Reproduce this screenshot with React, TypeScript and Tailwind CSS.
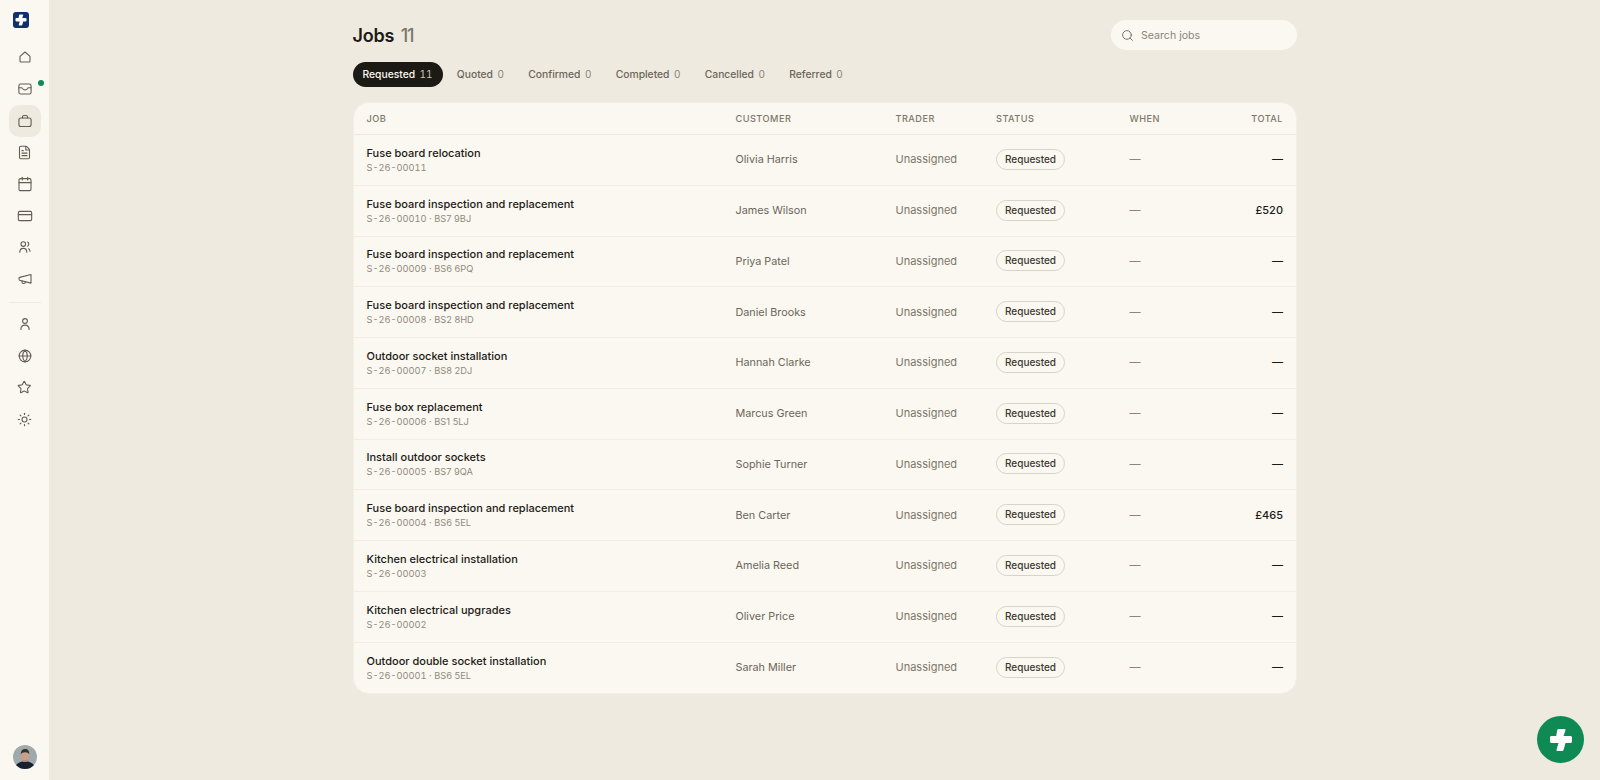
import React from 'react';
import { FileText, Calendar, CreditCard, Globe, Star, Sun, Search } from 'lucide-react';

interface Job {
  title: string;
  code: string;
  postcode?: string;
  customer: string;
  total: string;
}

const jobs: Job[] = [
  { title: 'Fuse board relocation', code: 'S-26-00011', customer: 'Olivia Harris', total: '—' },
  { title: 'Fuse board inspection and replacement', code: 'S-26-00010', postcode: 'BS7 9BJ', customer: 'James Wilson', total: '£520' },
  { title: 'Fuse board inspection and replacement', code: 'S-26-00009', postcode: 'BS6 6PQ', customer: 'Priya Patel', total: '—' },
  { title: 'Fuse board inspection and replacement', code: 'S-26-00008', postcode: 'BS2 8HD', customer: 'Daniel Brooks', total: '—' },
  { title: 'Outdoor socket installation', code: 'S-26-00007', postcode: 'BS8 2DJ', customer: 'Hannah Clarke', total: '—' },
  { title: 'Fuse box replacement', code: 'S-26-00006', postcode: 'BS1 5LJ', customer: 'Marcus Green', total: '—' },
  { title: 'Install outdoor sockets', code: 'S-26-00005', postcode: 'BS7 9QA', customer: 'Sophie Turner', total: '—' },
  { title: 'Fuse board inspection and replacement', code: 'S-26-00004', postcode: 'BS6 5EL', customer: 'Ben Carter', total: '£465' },
  { title: 'Kitchen electrical installation', code: 'S-26-00003', customer: 'Amelia Reed', total: '—' },
  { title: 'Kitchen electrical upgrades', code: 'S-26-00002', customer: 'Oliver Price', total: '—' },
  { title: 'Outdoor double socket installation', code: 'S-26-00001', postcode: 'BS6 5EL', customer: 'Sarah Miller', total: '—' },
];

const tabs = [
  { label: 'Requested', count: 11 },
  { label: 'Quoted', count: 0 },
  { label: 'Confirmed', count: 0 },
  { label: 'Completed', count: 0 },
  { label: 'Cancelled', count: 0 },
  { label: 'Referred', count: 0 },
];

const Glyph: React.FC<{ children: React.ReactNode }> = ({ children }) => (
  <svg viewBox="0 0 16 16" width="16" height="16" fill="none" stroke="currentColor" strokeWidth="1.100" strokeLinecap="round" strokeLinejoin="round">
    {children}
  </svg>
);

const HomeIcon = () => (
  <Glyph>
    <path d="M3 7.300 8 3l5 4.300V12a1 1 0 0 1-1 1H4a1 1 0 0 1-1-1z" />
  </Glyph>
);

const InboxIcon = () => (
  <Glyph>
    <rect x="1.900" y="3" width="12.200" height="10" rx="1.800" />
    <path d="M2 6.800h2.400c.5 0 .8.200 1 .6.500.9 1.400 1.500 2.600 1.500s2.100-.6 2.600-1.500c.2-.4.5-.6 1-.6H14" />
  </Glyph>
);

const BriefcaseIcon = () => (
  <Glyph>
    <rect x="1.900" y="5" width="12.200" height="8.500" rx="2" />
    <path d="M5.500 5V4A1.500 1.500 0 0 1 7 2.500h2A1.500 1.500 0 0 1 10.500 4v1" />
  </Glyph>
);

const UsersIcon = () => (
  <Glyph>
    <circle cx="6.300" cy="5.100" r="2.300" />
    <path d="M2.800 13.200c0-2.500 1.400-3.800 3.500-3.800s3.500 1.300 3.500 3.800" />
    <path d="M10.600 3c.8.400 1.200 1.200 1.200 2.100s-.4 1.700-1.200 2.100" />
    <path d="M11.700 9.700c.8.500 1.200 1.400 1.300 2.600" />
  </Glyph>
);

const MegaphoneIcon = () => (
  <Glyph>
    <path d="M14 3.500 2.600 6.400a.6.6 0 0 0-.5.6v1.600c0 .3.200.5.500.6L14 12.100z" />
    <path d="M5 9.900v1.200c0 .8.600 1.400 1.400 1.400h.6c.8 0 1.400-.6 1.400-1.400v-.4" />
  </Glyph>
);

const UserIcon = () => (
  <Glyph>
    <circle cx="8" cy="5" r="2.400" />
    <path d="M3.900 13.400c0-2.800 1.700-4.300 4.100-4.300s4.100 1.500 4.100 4.300" />
  </Glyph>
);

const Mark: React.FC<{ className?: string }> = ({ className }) => (
  <svg viewBox="0 0 24 24" className={className} fill="currentColor">
    <path d="M9.500 1h6c.8 0 1.200.6 1 1.300L14.500 8h7c.8 0 1.500.7 1.500 1.500v4c0 .8-.7 1.500-1.500 1.500h-5l-2 7c-.2.600-.6 1-1.200 1H8.500c-.8 0-1.200-.6-1-1.300L9.500 15h-7C1.700 15 1 14.300 1 13.500v-4C1 8.700 1.700 8 2.500 8h4.700l1.100-6c.1-.6.600-1 1.200-1z" />
  </svg>
);

const Avatar: React.FC = () => (
  <svg viewBox="0 0 24 24" className="h-6 w-6 rounded-full">
    <rect width="24" height="24" fill="#a0a9ac" />
    <path d="M2 24c0-5 4-6.500 7-7.500h6c3 1 7 2.500 7 7.500z" fill="#16202e" />
    <rect x="9.800" y="13" width="4.400" height="4" fill="#b48a74" />
    <ellipse cx="12" cy="10.500" rx="4.100" ry="4.800" fill="#c9a08a" />
    <path d="M7.900 9.500c-.4-3.500 1.600-5.500 4.300-5.500s4.400 2 3.900 5.500c-.6-1.500-1.500-2.300-3.900-2.300s-3.700.8-4.300 2.300z" fill="#3a302a" />
  </svg>
);

const NavButton: React.FC<{ children: React.ReactNode; active?: boolean; dot?: boolean }> = ({ children, active, dot }) => (
  <div className={`relative flex h-[31.700px] w-8 items-center justify-center rounded-[10px] text-[#625e53] ${active ? 'bg-[#eeeae0]' : ''}`}>
    {children}
    {dot && <span className="absolute -right-[3px] top-[6.500px] h-[6px] w-[6px] rounded-full bg-[#0f8a55]" />}
  </div>
);

const columns = 'grid grid-cols-[369px_160px_100.500px_133.500px_1fr_auto] items-center pl-[13px] pr-[12.500px]';
const lucide = { size: 15, strokeWidth: 1.750 };

const App: React.FC = () => {
  return (
    <div className="relative flex h-[780px] overflow-hidden bg-[#eeeae0] font-['Inter',sans-serif] text-[#1c1a16]">
      <aside className="flex w-[49px] shrink-0 flex-col items-center bg-[#fbf8f1] pb-[11px] pt-[12px]">
        <div className="ml-[13px] flex h-4 w-4 items-center justify-center self-start rounded-[3px] bg-[#10306b] text-white">
          <Mark className="h-3 w-3" />
        </div>
        <nav className="mt-[13.500px] flex flex-col items-center">
          <NavButton><HomeIcon /></NavButton>
          <NavButton dot><InboxIcon /></NavButton>
          <NavButton active><BriefcaseIcon /></NavButton>
          <NavButton><FileText {...lucide} /></NavButton>
          <NavButton><Calendar size={16} strokeWidth={1.650} /></NavButton>
          <NavButton><CreditCard size={16} strokeWidth={1.650} /></NavButton>
          <NavButton><UsersIcon /></NavButton>
          <NavButton><MegaphoneIcon /></NavButton>
          <div className="mb-[5.500px] mt-[7px] h-px w-8 bg-[#eeeae0]" />
          <NavButton><UserIcon /></NavButton>
          <NavButton><Globe size={14} strokeWidth={1.900} /></NavButton>
          <NavButton><Star size={14.500} strokeWidth={1.800} /></NavButton>
          <NavButton><Sun {...lucide} /></NavButton>
        </nav>
        <div className="mt-auto">
          <Avatar />
        </div>
      </aside>

      <main className="flex-1">
        <div className="mx-auto w-[944px] pt-[20px]">
          <div className="flex h-[30px] items-center justify-between">
            <h1 className="pt-[1px] text-[18px] font-semibold tracking-[-0.01em]">
              Jobs <span className="ml-[2px] font-medium tracking-[-0.06em] text-[#7d7769]">11</span>
            </h1>
            <div className="flex h-[30px] w-[186px] items-center gap-[7px] rounded-full bg-[#fbf8f1] px-[10.500px] text-[#8b8679]">
              <Search size={13} strokeWidth={1.700} className="text-[#6b665a]" />
              <span className="pt-[2.500px] text-[10.600px]">Search jobs</span>
            </div>
          </div>

          <div className="mt-[12px] flex items-center gap-[4.300px]">
            {tabs.map((t, i) => (
              <div
                key={t.label}
                className={`flex h-[25px] items-center gap-[4.500px] rounded-full px-[10px] text-[10.300px] font-medium ${i === 0 ? 'bg-[#1c1a14] text-[#fbf8f1]' : 'text-[#6b665a]'}`}
              >
                <span>{t.label}</span>
                <span className={`text-[10px] font-normal tabular-nums ${i === 0 ? 'text-[#c9c5b9]' : 'text-[#8b8679]'}`}>{t.count}</span>
              </div>
            ))}
          </div>

          <div className="mt-[15px] overflow-hidden rounded-[16px] border border-[#f3efe6] bg-[#fbf8f1]">
            <div className={`${columns} h-[32px] border-b border-[#ece8de] text-[9.200px] font-medium uppercase tracking-[0.05em] text-[#7d7769]`}>
              <div>Job</div>
              <div>Customer</div>
              <div>Trader</div>
              <div>Status</div>
              <div>When</div>
              <div className="text-right">Total</div>
            </div>
            {jobs.map((job, i) => (
              <div key={job.code} className={`${columns} h-[50.750px] ${i < jobs.length - 1 ? 'border-b border-[#f1ede4]' : ''}`}>
                <div>
                  <div className="text-[11px] font-medium leading-[15px] text-[#1c1a16]">{job.title}</div>
                  <div className="text-[9.250px] leading-[13px] text-[#8f8a7d]">
                    <span className="tabular-nums">{job.code}</span>
                    {job.postcode && <span> · {job.postcode}</span>}
                  </div>
                </div>
                <div className="text-[10.800px] leading-[15px] text-[#6b665a]">{job.customer}</div>
                <div className="text-[11px] leading-[15px] text-[#7d7769]">Unassigned</div>
                <div className="flex">
                  <span className="-mt-[1px] inline-flex h-[21px] items-center rounded-full border border-[#d8d3c7] px-[8px] text-[10px] font-medium text-[#3a372f]">Requested</span>
                </div>
                <div className="text-[11px] leading-[15px] text-[#8b8679]">—</div>
                <div className="text-right text-[11px] font-medium leading-[15px] text-[#1c1a16]">{job.total}</div>
              </div>
            ))}
          </div>
        </div>
      </main>

      <div className="absolute bottom-[17px] right-[16px] flex h-[47px] w-[47px] items-center justify-center rounded-full bg-[#0f8a55] text-white">
        <Mark className="h-[24px] w-[24px]" />
      </div>
    </div>
  );
};

export default App;
